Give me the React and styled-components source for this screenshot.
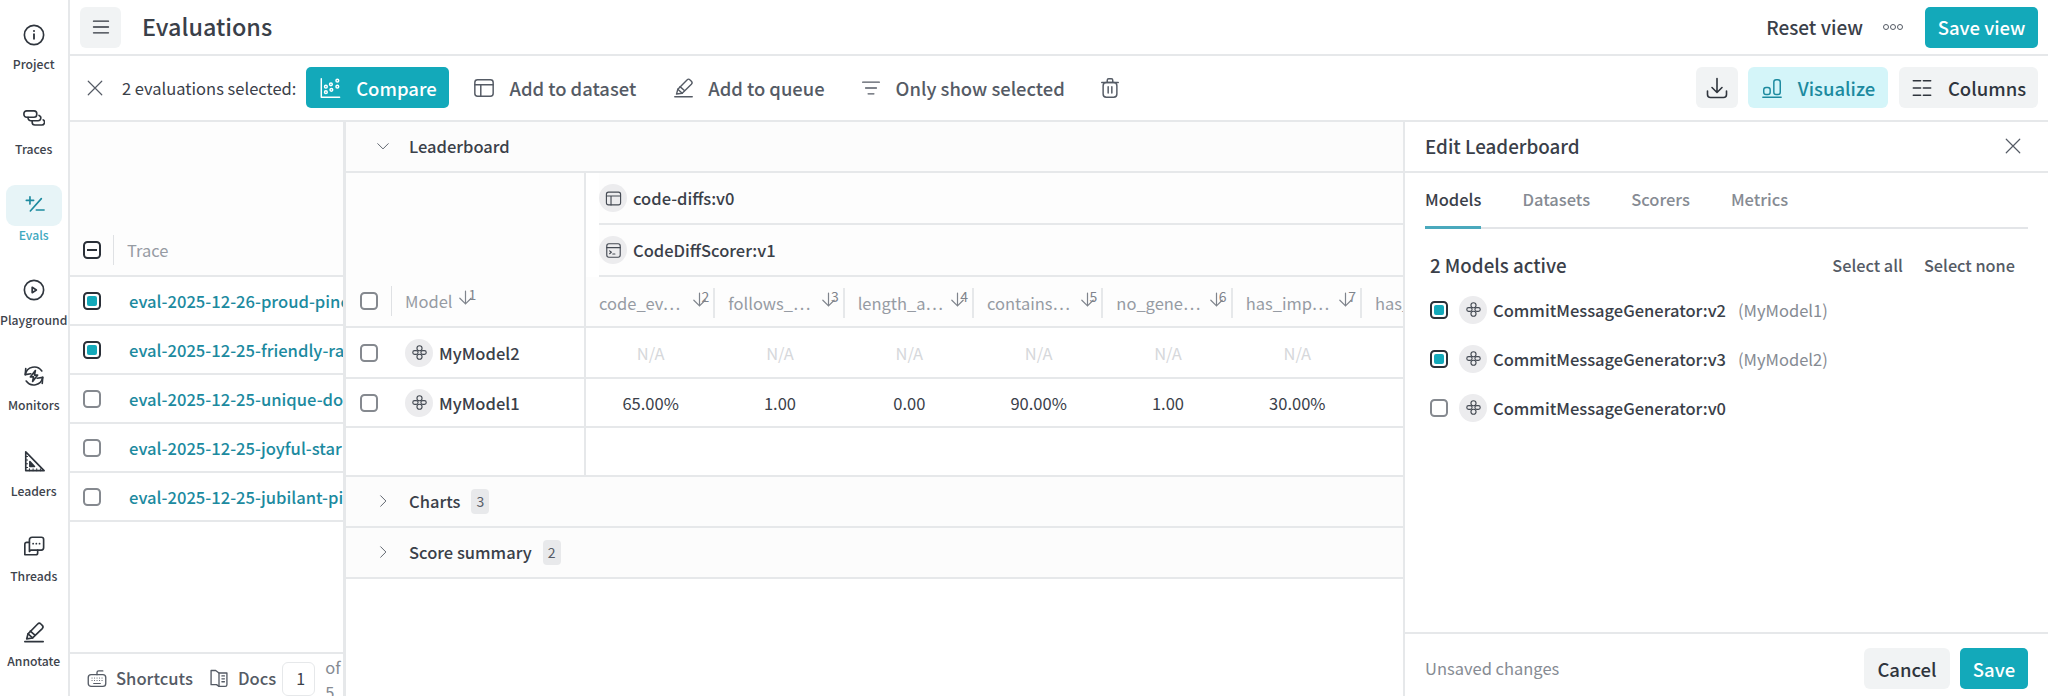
import React from "react";
import styled, { createGlobalStyle } from "styled-components";

const TEAL = "#13a9ba";
const INK = "#3a4049";
const MID = "#555b65";
const LINE = "#e6e8ea";

const Global = createGlobalStyle`
  *, *::before, *::after { box-sizing: border-box; }
  html, body { margin: 0; height: 696px; overflow: hidden; background: #fff; }
  body { font-family: "Noto Sans CJK SC", "Noto Sans", sans-serif; color: ${INK}; }
  #root { height: 696px; }
`;

const Svg = styled.svg`
  display: block;
  flex: none;
  width: ${(p) => p.$s || 20}px;
  height: ${(p) => p.$s || 20}px;
  fill: none;
  stroke: currentColor;
  stroke-width: ${(p) => p.$w || 1.6};
  stroke-linecap: round;
  stroke-linejoin: round;
`;

const Icon = ({ s, w, children }) => (
  <Svg viewBox="0 0 24 24" $s={s} $w={w}>
    {children}
  </Svg>
);

const InfoIcon = (p) => (
  <Icon {...p}>
    <circle cx="12" cy="12" r="10.5" />
    <path d="M12 11.2v5" strokeWidth="2" />
    <path d="M12 7.6v.1" strokeWidth="2.2" />
  </Icon>
);
const TracesIcon = (p) => (
  <Icon {...p}>
    <rect x="1" y="2" width="14" height="7" rx="3" />
    <path d="M5.5 9v.8a3 3 0 0 0 3 3h8a3 3 0 0 0 1-5.800" />
    <path d="M10 12.800v1.700a3 3 0 0 0 3 3h7.500a3 3 0 0 0 1.500-5.600" />
  </Icon>
);
const EvalsIcon = (p) => (
  <Icon {...p}>
    <path d="M7.6 3v8M3.6 7h8M20 5 8 18.5M14.5 17.5h8.5" />
  </Icon>
);
const PlayIcon = (p) => (
  <Icon {...p}>
    <circle cx="12" cy="12" r="10.5" />
    <path d="M10 9v6l4.6-3z" />
  </Icon>
);
const MonitorIcon = (p) => (
  <Icon {...p}>
    <path d="M2.500 10.500A10 10 0 0 1 20.500 6.500" />
    <path d="M3 4l-.5 6.500 6-1" />
    <path d="M21.500 13.500A10 10 0 0 1 3.500 17.500" />
    <path d="M21 20l.5-6.500-6 1" />
    <path d="M13.500 6 8 13h3.500l-1 5L16 11h-3.500z" />
  </Icon>
);
const LeadersIcon = (p) => (
  <Icon {...p}>
    <path d="M3 2 23 22.500H3z" />
    <path d="M7.500 12.500 12.500 18H7.500z" fill="currentColor" />
    <path d="M3 7h2M3 11h2M3 15h2M3 19h2M7 22.500v-2M11 22.500v-2M15 22.500v-2M19 22.500v-2" strokeWidth="1.100" />
  </Icon>
);
const ThreadsIcon = (p) => (
  <Icon {...p}>
    <path d="M7 5.500A3 3 0 0 1 10 2.500h10A2.500 2.500 0 0 1 22.500 5v9a2.500 2.500 0 0 1-2.500 2.500H8.500L7 18z" />
    <path d="M7 8H4a2 2 0 0 0-2 2v11.500h12a2 2 0 0 0 2-2v-3" />
    <path d="M11 9.500h.1M14.500 9.500h.1M18 9.500h.1" strokeWidth="1.900" />
  </Icon>
);
const PencilIcon = (p) => (
  <Icon {...p}>
    <path d="M2 22.500h20" />
    <path d="M4 19.500 5.500 14 16 3.300a2.500 2.500 0 0 1 3.500 0l1.500 1.500a2.500 2.500 0 0 1 0 3.500L10.500 18.500z" />
    <path d="M5.500 14 10.500 18.500M8 11l5 4.500" />
  </Icon>
);
const TableIcon = (p) => (
  <Icon {...p}>
    <rect x="2" y="3" width="20" height="18" rx="3" />
    <path d="M2 8.500h20M8.500 8.500V21" />
  </Icon>
);
const TerminalIcon = (p) => (
  <Icon {...p}>
    <rect x="2.500" y="2.500" width="19" height="19" rx="3" />
    <path d="M2.500 8h19M6.500 12.500l2.500 2-2.500 2M11 17h3" />
  </Icon>
);
const ScatterIcon = (p) => (
  <Icon {...p}>
    <path d="M2.500 2v20h20" />
    <circle cx="7.500" cy="10.500" r="1.500" />
    <circle cx="7.500" cy="16.500" r="1.500" />
    <circle cx="13" cy="8" r="1.500" />
    <circle cx="13.500" cy="14" r="1.500" />
    <circle cx="20" cy="4" r="1.500" />
    <circle cx="20" cy="10.500" r="1.500" />
  </Icon>
);
const FilterIcon = (p) => (
  <Icon {...p}>
    <path d="M2 5h20M5.500 12h13M8.500 19h7" />
  </Icon>
);
const TrashIcon = (p) => (
  <Icon {...p}>
    <path d="M3 6h18M9 6V3.500A1.500 1.500 0 0 1 10.500 2h3A1.500 1.500 0 0 1 15 3.500V6" />
    <rect x="4.500" y="6" width="15" height="16" rx="3.500" />
    <path d="M10 10.500v7M14 10.500v7" />
  </Icon>
);
const DownloadIcon = (p) => (
  <Icon {...p}>
    <path d="M12 2.500V16M7 11.500l5 5 5-5" />
    <path d="M2.500 15v3.500a3 3 0 0 0 3 3h13a3 3 0 0 0 3-3V15" />
  </Icon>
);
const VizIcon = (p) => (
  <Icon {...p}>
    <path d="M2 22h20" />
    <rect x="3" y="11.500" width="7" height="7.500" rx="2.500" />
    <rect x="14" y="3" width="7" height="16" rx="2.500" />
  </Icon>
);
const ColumnsIcon = (p) => (
  <Icon {...p}>
    <path d="M2.500 4h8M13.500 4h8M2.500 12h8M13.500 12h8M2.500 20h8M13.500 20h8" />
  </Icon>
);
const ModelIcon = (p) => (
  <Icon {...p}>
    <circle cx="12" cy="6" r="3.600" />
    <circle cx="12" cy="18" r="3.600" />
    <rect x="2.500" y="9.400" width="7.500" height="5.200" rx="2.600" />
    <rect x="14" y="9.400" width="7.500" height="5.200" rx="2.600" />
  </Icon>
);
const CrossIcon = (p) => (
  <Icon {...p}>
    <path d="M3 3l18 18M21 3 3 21" />
  </Icon>
);
const MenuIcon = (p) => (
  <Icon {...p}>
    <path d="M3 5h18M3 12h18M3 19h18" />
  </Icon>
);
const ChevronDown = (p) => (
  <Icon {...p}>
    <path d="M3 8l9 9 9-9" />
  </Icon>
);
const ChevronRight = (p) => (
  <Icon {...p}>
    <path d="M8 3l9 9-9 9" />
  </Icon>
);
const KeyboardIcon = (p) => (
  <Icon {...p}>
    <rect x="1.500" y="8" width="21" height="14" rx="3.500" />
    <path d="M12 8V5.500A2 2 0 0 1 14 3.500h5" />
    <path d="M6 12h.1M9 12h.1M12 12h.1M15 12h.1M18 12h.1M6 15h.1M9 15h.1M12 15h.1M15 15h.1M18 15h.1M8 18.500h8" strokeWidth="1.300" />
  </Icon>
);
const BookIcon = (p) => (
  <Icon {...p}>
    <path d="M12 6 8 3H2.500v17H9l3 2h7.500a2 2 0 0 0 2-2V6z" />
    <path d="M12 6v16M15.500 9.500h3M15.500 13h3M15.500 16.500h3" />
  </Icon>
);

const Page = styled.div`
  display: grid;
  grid-template-columns: 70px 1fr;
  width: 2048px;
  height: 696px;
  overflow: hidden;
`;

const Rail = styled.nav`
  display: grid;
  grid-auto-rows: 85.33px;
  align-content: start;
  border-right: 2px solid ${LINE};
  overflow: hidden;
`;
const RailItem = styled.div`
  display: flex;
  flex-direction: column;
  align-items: center;
  padding: 14px 2px 0 0;
`;
const RailIconBox = styled.div`
  width: 56px;
  height: 41px;
  flex: none;
  display: flex;
  align-items: center;
  justify-content: center;
  border-radius: 9px;
  color: ${(p) => (p.$active ? "#1c8a9f" : "#2f353d")};
  background: ${(p) => (p.$active ? "#e7f4f7" : "transparent")};
`;
const RailLabel = styled.span`
  font-size: 12.200px;
  line-height: 18px;
  font-weight: 500;
  margin-top: 0;
  white-space: nowrap;
  color: ${(p) => (p.$active ? "#3fa9bf" : "#3d434c")};
`;

const Main = styled.div`
  display: grid;
  grid-template-rows: 56px 66px 1fr;
  min-width: 0;
`;

const Header = styled.header`
  display: flex;
  align-items: center;
  padding: 0 10px;
  border-bottom: 2px solid ${LINE};
`;
const MenuButton = styled.button`
  width: 41px;
  height: 41px;
  border: 0;
  padding: 0;
  border-radius: 6px;
  background: #f1f3f4;
  color: #2f353d;
  display: flex;
  align-items: center;
  justify-content: center;
`;
const Title = styled.h1`
  margin: -2px 0 0 21px;
  font-size: 23.400px;
  line-height: 32px;
  font-weight: 500;
  color: ${INK};
`;
const Spacer = styled.div`
  flex: 1;
`;
const ResetLabel = styled.span`
  font-size: 19px;
  line-height: 26px;
  font-weight: 500;
  color: ${INK};
`;
const Dots = styled.div`
  display: flex;
  gap: 1px;
  margin: 0 22px 0 20px;
`;
const Dot = styled.span`
  width: 6px;
  height: 6px;
  border: 1.300px solid ${MID};
  border-radius: 50%;
`;
const PrimaryButton = styled.button`
  height: 41px;
  width: ${(p) => p.$w}px;
  margin-left: ${(p) => p.$ml || 0}px;
  border: 0;
  padding: 0;
  border-radius: 5px;
  background: ${TEAL};
  color: #fff;
  font: 500 18.500px/26px "Noto Sans CJK SC", sans-serif;
  display: flex;
  align-items: center;
  justify-content: center;
  gap: 15px;
`;

const Toolbar = styled.div`
  display: flex;
  align-items: center;
  padding: 0 10px 1px 16px;
  border-bottom: 2px solid ${LINE};
  color: ${MID};
`;
const SelectedText = styled.span`
  font-size: 16.500px;
  line-height: 24px;
  margin: 0 10px 0 18px;
  color: ${INK};
`;
const ToolAction = styled.div`
  display: flex;
  align-items: center;
  gap: ${(p) => p.$gap || 14}px;
  margin-left: ${(p) => p.$ml}px;
  font-size: 18.400px;
  line-height: 26px;
  font-weight: 500;
  color: ${MID};
`;
const GreyButton = styled.button`
  height: 41px;
  width: ${(p) => p.$w}px;
  margin-left: ${(p) => p.$ml || 0}px;
  border: 0;
  padding: 0;
  border-radius: 6px;
  background: ${(p) => (p.$tint ? "#d4f5f9" : "#f1f3f4")};
  color: ${(p) => (p.$tint ? "#1c8a9f" : "#2f353d")};
  font: 500 18.500px/26px "Noto Sans CJK SC", sans-serif;
  display: flex;
  align-items: center;
  justify-content: center;
  gap: 15px;
`;

const Content = styled.div`
  display: flex;
  min-height: 0;
`;

const TracePane = styled.section`
  width: 276px;
  flex: none;
  display: flex;
  flex-direction: column;
  border-right: 3px solid ${LINE};
  overflow: hidden;
`;
const TraceHead = styled.div`
  height: 155px;
  flex: none;
  display: flex;
  align-items: flex-end;
  padding-left: 13px;
  background: #fdfdfd;
  border-bottom: 2px solid ${LINE};
`;
const HeadRow = styled.div`
  height: 50px;
  display: flex;
  align-items: center;
`;
const Divider = styled.span`
  width: 1px;
  height: 30px;
  flex: none;
  background: #dfe1e4;
  margin: ${(p) => p.$m || "0 13px 0 12px"};
`;
const HeadLabel = styled.span`
  font-size: 16.500px;
  line-height: 30px;
  color: #969ba3;
`;
const TraceRow = styled.div`
  height: 49px;
  flex: none;
  display: flex;
  align-items: center;
  padding-left: 13px;
  border-bottom: 2px solid ${LINE};
`;
const TraceLink = styled.span`
  margin-left: 28px;
  font-size: 16.600px;
  line-height: 24px;
  font-weight: 500;
  white-space: nowrap;
  color: #1c8a9f;
`;
const TraceFill = styled.div`
  flex: 1;
`;
const TraceFoot = styled.div`
  height: 44px;
  flex: none;
  display: flex;
  align-items: flex-start;
  padding: 8px 0 0 17px;
  border-top: 2px solid ${LINE};
  color: ${MID};
`;
const FootLink = styled.div`
  display: flex;
  align-items: center;
  gap: 9px;
  height: 32px;
  margin-right: ${(p) => p.$mr}px;
  font-size: 16.600px;
  line-height: 24px;
  font-weight: 500;
  white-space: nowrap;
`;
const PageInput = styled.div`
  width: 33px;
  height: 34px;
  flex: none;
  border: 1.500px solid ${LINE};
  border-radius: 6px;
  font-size: 16px;
  line-height: 31px;
  padding-left: 13px;
  overflow: hidden;
  color: ${INK};
`;
const PageOf = styled.div`
  width: 16px;
  margin-left: 10px;
  margin-top: -7px;
  font-size: 16.500px;
  line-height: 25px;
  color: #868b93;
`;

const Box = styled.span`
  width: 18px;
  height: 18px;
  flex: none;
  border-radius: 4.500px;
  border: 2px solid ${(p) => (p.$on || p.$minus ? "#2a3038" : "#85898f")};
  background: #fff;
  display: flex;
  align-items: center;
  justify-content: center;
`;
const BoxFill = styled.span`
  width: 10px;
  height: 10px;
  border-radius: 2px;
  background: ${TEAL};
`;
const BoxDash = styled.span`
  width: 10px;
  height: 2px;
  background: #2a3038;
`;
const Check = ({ on, minus }) => (
  <Box $on={on} $minus={minus}>
    {on && <BoxFill />}
    {minus && <BoxDash />}
  </Box>
);

const Board = styled.section`
  flex: 1;
  min-width: 0;
  display: flex;
  flex-direction: column;
`;
const SectionRow = styled.div`
  height: 51px;
  flex: none;
  display: flex;
  align-items: center;
  padding: 0 0 1px 30px;
  background: #fcfcfc;
  border-bottom: 2px solid ${LINE};
  color: ${MID};
`;
const SectionLabel = styled.span`
  margin-left: 19px;
  font-size: 16.500px;
  line-height: 24px;
  font-weight: 500;
  color: ${INK};
`;
const CountBadge = styled.span`
  margin-left: 11px;
  width: 18px;
  height: 25px;
  border-radius: 4px;
  background: #e8e9eb;
  font-size: 14px;
  line-height: 25px;
  text-align: center;
  color: ${MID};
`;
const BoardGrid = styled.div`
  display: grid;
  grid-template-columns: 240px 1fr;
  flex: none;
`;
const ModelCol = styled.div`
  border-right: 2px solid ${LINE};
  display: flex;
  flex-direction: column;
`;
const ModelHead = styled.div`
  height: 155px;
  display: flex;
  align-items: flex-end;
  padding-left: 14px;
  background: #fdfdfd;
  border-bottom: 2px solid ${LINE};
`;
const ModelCell = styled.div`
  height: ${(p) => p.$h}px;
  display: flex;
  align-items: center;
  padding-left: 14px;
  border-bottom: 2px solid ${LINE};
`;
const RoundIcon = styled.span`
  width: 28px;
  height: 28px;
  flex: none;
  border-radius: 50%;
  background: #ececee;
  color: #444a53;
  display: flex;
  align-items: center;
  justify-content: center;
  margin: ${(p) => p.$m || 0};
`;
const ModelName = styled.span`
  margin-left: 6px;
  font-size: 16.500px;
  line-height: 24px;
  font-weight: 500;
  white-space: nowrap;
  color: ${INK};
`;
const SortMark = styled.span`
  display: flex;
  align-items: flex-start;
  flex: none;
  color: #7f848c;
  height: 24px;
  margin-left: ${(p) => p.$ml || 0}px;
`;
const SortNum = styled.span`
  font-size: 14px;
  line-height: 14px;
  margin-left: -6px;
  margin-top: -2px;
`;
const Sort = ({ n, ml }) => (
  <SortMark $ml={ml}>
    <Svg viewBox="0 0 24 24" $s={17} $w={1.700}>
      <path d="M12 3v18M4 13l8 8 8-8" />
    </Svg>
    <SortNum>{n}</SortNum>
  </SortMark>
);

const MetricSide = styled.div`
  display: flex;
  flex-direction: column;
  min-width: 0;
  overflow: hidden;
`;
const SourceRow = styled.div`
  height: 52px;
  display: flex;
  align-items: center;
  margin-left: 13px;
  background: #fdfdfd;
  border-bottom: 2px solid ${LINE};
`;
const MetricGrid = styled.div`
  display: grid;
  grid-template-columns: repeat(7, 129.330px);
  grid-template-rows: 51px 51px 49px 49px;
  flex: none;
`;
const MetricHead = styled.div`
  display: flex;
  align-items: center;
  padding: 2px 0 0 13px;
  background: #fdfdfd;
  border-bottom: 2px solid ${LINE};
`;
const MetricLabel = styled.span`
  flex: 1;
  min-width: 0;
  font-size: 16.500px;
  line-height: 24px;
  white-space: nowrap;
  color: #969ba3;
`;
const MetricRule = styled.span`
  width: 2px;
  height: 30px;
  flex: none;
  margin-left: 4px;
  background: ${LINE};
`;
const Value = styled.div`
  display: flex;
  align-items: center;
  justify-content: center;
  font-size: 16.500px;
  line-height: 24px;
  border-bottom: 2px solid ${LINE};
  color: ${(p) => (p.$na ? "#d6d8db" : INK)};
`;

const Panel = styled.aside`
  width: 645px;
  flex: none;
  display: flex;
  flex-direction: column;
  border-left: 2px solid ${LINE};
`;
const PanelHead = styled.div`
  height: 51px;
  flex: none;
  display: flex;
  align-items: center;
  justify-content: space-between;
  padding: 0 26px 1px 20px;
  border-bottom: 2px solid ${LINE};
  color: ${MID};
`;
const PanelTitle = styled.span`
  font-size: 18.800px;
  line-height: 26px;
  font-weight: 500;
  color: ${INK};
`;
const Tabs = styled.div`
  height: 56px;
  flex: none;
  display: flex;
  gap: 41px;
  margin: 0 20px;
  border-bottom: 2px solid #e3e5e8;
`;
const Tab = styled.div`
  height: 56px;
  padding-top: 14px;
  font-size: 16.500px;
  line-height: 24px;
  font-weight: 500;
  color: ${(p) => (p.$active ? INK : "#868b93")};
  border-bottom: 3px solid ${(p) => (p.$active ? "#4aa9bd" : "transparent")};
`;
const PanelBody = styled.div`
  flex: 1;
  padding: 22px 20px 0 25px;
`;
const ActiveRow = styled.div`
  display: flex;
  align-items: center;
  height: 28px;
  margin-bottom: 6px;
`;
const ActiveTitle = styled.span`
  flex: 1;
  font-size: 18.700px;
  line-height: 26px;
  font-weight: 500;
  color: ${INK};
`;
const SelectLink = styled.span`
  margin-right: ${(p) => p.$mr}px;
  font-size: 16.300px;
  line-height: 24px;
  font-weight: 500;
  color: ${MID};
`;
const PickRow = styled.div`
  display: flex;
  align-items: center;
  height: 49px;
`;
const PickAlias = styled.span`
  margin-left: 12px;
  font-size: 16.500px;
  line-height: 24px;
  color: #868b93;
`;
const PanelFoot = styled.div`
  height: 64px;
  flex: none;
  display: flex;
  align-items: flex-start;
  padding: 14px 20px 0;
  border-top: 2px solid ${LINE};
`;
const Unsaved = styled.span`
  flex: 1;
  font-size: 16.500px;
  line-height: 41px;
  color: #868b93;
`;

const railItems = [
  ["Project", InfoIcon],
  ["Traces", TracesIcon],
  ["Evals", EvalsIcon, true],
  ["Playground", PlayIcon],
  ["Monitors", MonitorIcon],
  ["Leaders", LeadersIcon],
  ["Threads", ThreadsIcon],
  ["Annotate", PencilIcon],
];

const traces = [
  ["eval-2025-12-26-proud-pine", true],
  ["eval-2025-12-25-friendly-raven", true],
  ["eval-2025-12-25-unique-dove", false],
  ["eval-2025-12-25-joyful-star", false],
  ["eval-2025-12-25-jubilant-pike", false],
];

const metrics = [
  ["code_ev…", 2],
  ["follows_…", 3],
  ["length_a…", 4],
  ["contains…", 5],
  ["no_gene…", 6],
  ["has_imp…", 7],
  ["has_con…", 8],
];
const row1 = ["65.00%", "1.00", "0.00", "90.00%", "1.00", "30.00%", ""];

const picks = [
  ["CommitMessageGenerator:v2", "(MyModel1)", true],
  ["CommitMessageGenerator:v3", "(MyModel2)", true],
  ["CommitMessageGenerator:v0", "", false],
];

export default function App() {
  return (
    <Page>
      <Global />
      <Rail>
        {railItems.map(([label, I, active]) => (
          <RailItem key={label}>
            <RailIconBox $active={active}>
              <I s={22} w={1.800} />
            </RailIconBox>
            <RailLabel $active={active}>{label}</RailLabel>
          </RailItem>
        ))}
      </Rail>
      <Main>
        <Header>
          <MenuButton>
            <MenuIcon s={20} />
          </MenuButton>
          <Title>Evaluations</Title>
          <Spacer />
          <ResetLabel>Reset view</ResetLabel>
          <Dots>
            <Dot />
            <Dot />
            <Dot />
          </Dots>
          <PrimaryButton $w={113}>Save view</PrimaryButton>
        </Header>
        <Toolbar>
          <CrossIcon s={18} />
          <SelectedText>2 evaluations selected:</SelectedText>
          <PrimaryButton $w={143}>
            <ScatterIcon s={22} />
            Compare
          </PrimaryButton>
          <ToolAction $ml={24}>
            <TableIcon s={22} />
            Add to dataset
          </ToolAction>
          <ToolAction $ml={37}>
            <PencilIcon s={21} />
            Add to queue
          </ToolAction>
          <ToolAction $ml={36} $gap={15}>
            <FilterIcon s={20} />
            Only show selected
          </ToolAction>
          <ToolAction $ml={34}>
            <TrashIcon s={22} />
          </ToolAction>
          <Spacer />
          <GreyButton $w={42}>
            <DownloadIcon s={24} />
          </GreyButton>
          <GreyButton $w={140} $ml={10} $tint>
            <VizIcon s={22} />
            Visualize
          </GreyButton>
          <GreyButton $w={139} $ml={11}>
            <ColumnsIcon s={22} />
            Columns
          </GreyButton>
        </Toolbar>
        <Content>
          <TracePane>
            <TraceHead>
              <HeadRow>
                <Check minus />
                <Divider />
                <HeadLabel>Trace</HeadLabel>
              </HeadRow>
            </TraceHead>
            {traces.map(([name, on]) => (
              <TraceRow key={name}>
                <Check on={on} />
                <TraceLink>{name}</TraceLink>
              </TraceRow>
            ))}
            <TraceFill />
            <TraceFoot>
              <FootLink $mr={16}>
                <KeyboardIcon s={20} />
                Shortcuts
              </FootLink>
              <FootLink $mr={6}>
                <BookIcon s={20} />
                Docs
              </FootLink>
              <PageInput>1</PageInput>
              <PageOf>of 5</PageOf>
            </TraceFoot>
          </TracePane>
          <Board>
            <SectionRow>
              <ChevronDown s={14} />
              <SectionLabel>Leaderboard</SectionLabel>
            </SectionRow>
            <BoardGrid>
              <ModelCol>
                <ModelHead>
                  <HeadRow>
                    <Check />
                    <Divider $m="0 13px" />
                    <HeadLabel>Model</HeadLabel>
                    <Sort n={1} ml={5} />
                  </HeadRow>
                </ModelHead>
                <ModelCell $h={51}>
                  <Check />
                  <RoundIcon $m="0 0 0 27px">
                    <ModelIcon s={17} />
                  </RoundIcon>
                  <ModelName>MyModel2</ModelName>
                </ModelCell>
                <ModelCell $h={49}>
                  <Check />
                  <RoundIcon $m="0 0 0 27px">
                    <ModelIcon s={17} />
                  </RoundIcon>
                  <ModelName>MyModel1</ModelName>
                </ModelCell>
                <ModelCell $h={49} />
              </ModelCol>
              <MetricSide>
                <SourceRow>
                  <RoundIcon>
                    <TableIcon s={17} />
                  </RoundIcon>
                  <ModelName>code-diffs:v0</ModelName>
                </SourceRow>
                <SourceRow>
                  <RoundIcon>
                    <TerminalIcon s={17} />
                  </RoundIcon>
                  <ModelName>CodeDiffScorer:v1</ModelName>
                </SourceRow>
                <MetricGrid>
                  {metrics.map(([m, n]) => (
                    <MetricHead key={m}>
                      <MetricLabel>{m}</MetricLabel>
                      <Sort n={n} />
                      <MetricRule />
                    </MetricHead>
                  ))}
                  {metrics.map(([m], i) => (
                    <Value key={m} $na>
                      {i < 6 ? "N/A" : ""}
                    </Value>
                  ))}
                  {metrics.map(([m], i) => (
                    <Value key={m}>{row1[i]}</Value>
                  ))}
                  {metrics.map(([m]) => (
                    <Value key={m} />
                  ))}
                </MetricGrid>
              </MetricSide>
            </BoardGrid>
            <SectionRow>
              <ChevronRight s={14} />
              <SectionLabel>Charts</SectionLabel>
              <CountBadge>3</CountBadge>
            </SectionRow>
            <SectionRow>
              <ChevronRight s={14} />
              <SectionLabel>Score summary</SectionLabel>
              <CountBadge>2</CountBadge>
            </SectionRow>
          </Board>
          <Panel>
            <PanelHead>
              <PanelTitle>Edit Leaderboard</PanelTitle>
              <CrossIcon s={18} />
            </PanelHead>
            <Tabs>
              <Tab $active>Models</Tab>
              <Tab>Datasets</Tab>
              <Tab>Scorers</Tab>
              <Tab>Metrics</Tab>
            </Tabs>
            <PanelBody>
              <ActiveRow>
                <ActiveTitle>2 Models active</ActiveTitle>
                <SelectLink $mr={21}>Select all</SelectLink>
                <SelectLink $mr={13}>Select none</SelectLink>
              </ActiveRow>
              {picks.map(([name, alias, on]) => (
                <PickRow key={name}>
                  <Check on={on} />
                  <RoundIcon $m="0 0 0 11px">
                    <ModelIcon s={17} />
                  </RoundIcon>
                  <ModelName>{name}</ModelName>
                  {alias && <PickAlias>{alias}</PickAlias>}
                </PickRow>
              ))}
            </PanelBody>
            <PanelFoot>
              <Unsaved>Unsaved changes</Unsaved>
              <GreyButton $w={86}>Cancel</GreyButton>
              <PrimaryButton $w={68} $ml={10}>
                Save
              </PrimaryButton>
            </PanelFoot>
          </Panel>
        </Content>
      </Main>
    </Page>
  );
}
